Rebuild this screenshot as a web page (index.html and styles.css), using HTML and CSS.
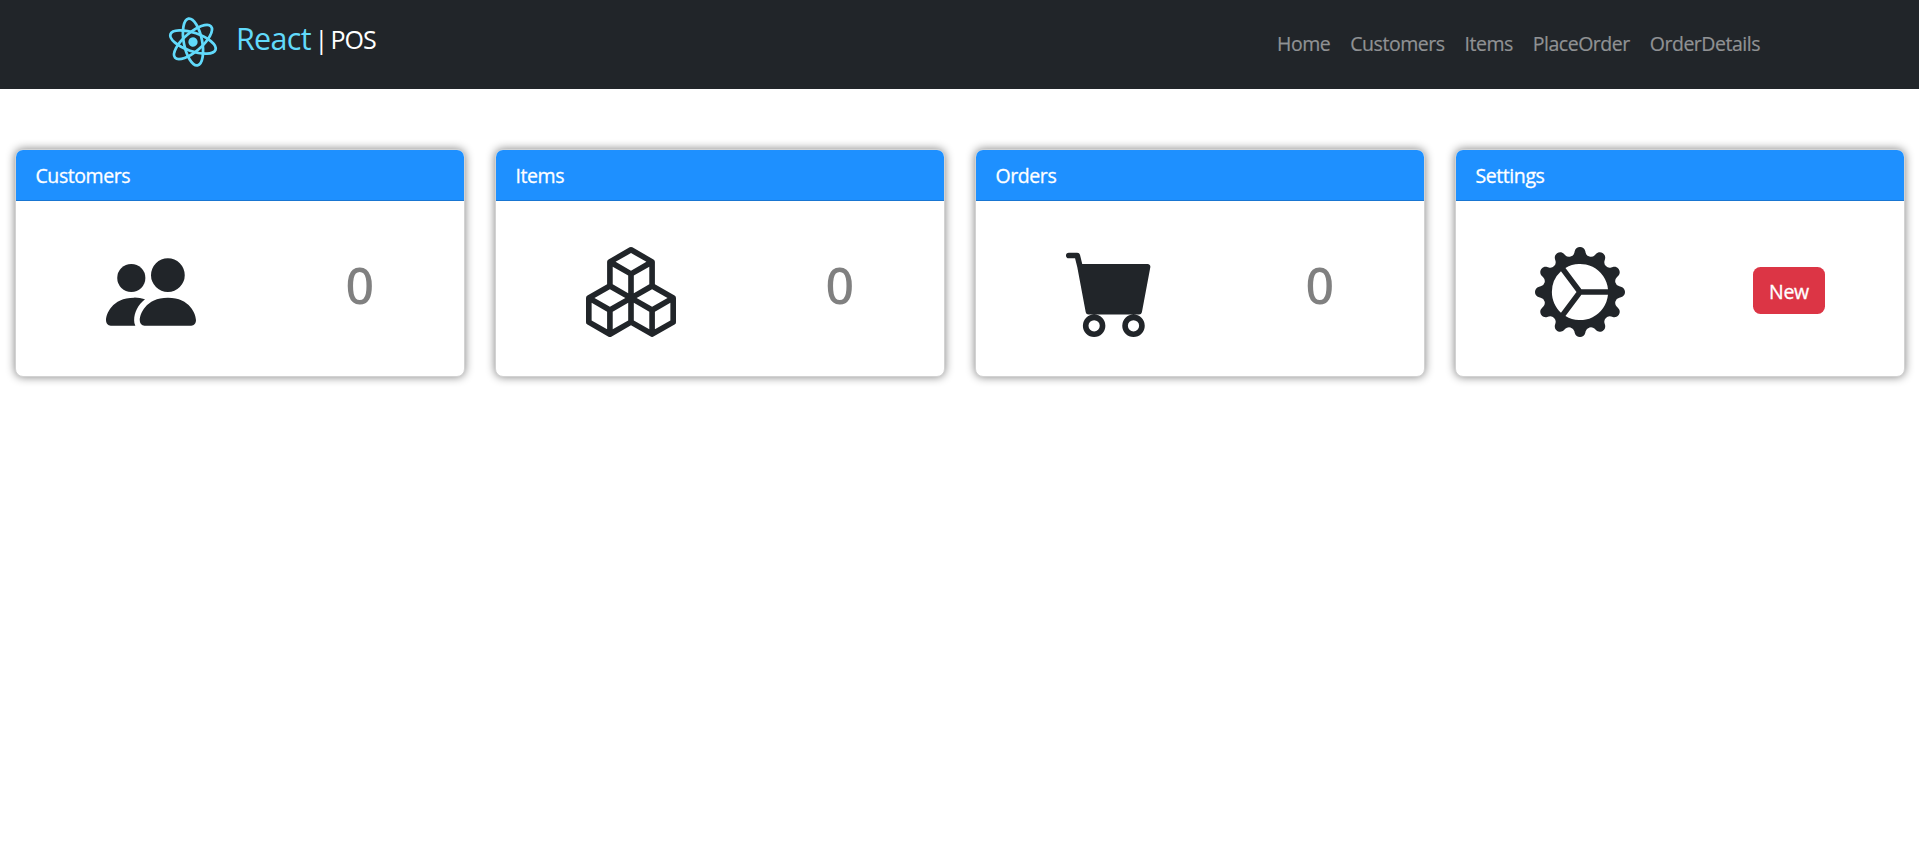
FILE: index.html
```html
<!DOCTYPE html>
<html lang="en">
<head>
<meta charset="utf-8">
<title>React | POS</title>
<link rel="stylesheet" href="styles.css">
</head>
<body>
<header class="navbar">
  <a class="brand">
    <svg class="logo" viewBox="-256 -256 512 512">
      <g transform="rotate(19)">
        <circle class="nucleus" r="44"/>
        <ellipse rx="226" ry="87"/>
        <ellipse rx="226" ry="87" transform="rotate(60)"/>
        <ellipse rx="226" ry="87" transform="rotate(120)"/>
      </g>
    </svg>
    <span class="brand-react">React</span><span class="brand-bar">|</span><span class="brand-pos">POS</span>
  </a>
  <nav class="links">
    <a>Home</a><a>Customers</a><a>Items</a><a>PlaceOrder</a><a>OrderDetails</a>
  </nav>
</header>
<main class="cards">
  <section class="card">
    <h2 class="card-header">Customers</h2>
    <div class="card-body">
      <svg class="icon" viewBox="0 0 16 16"><path d="M7 14s-1 0-1-1 1-4 5-4 5 3 5 4-1 1-1 1H7zm4-6a3 3 0 1 0 0-6 3 3 0 0 0 0 6z"/><path d="M5.216 14A2.238 2.238 0 0 1 5 13c0-1.355.68-2.75 1.936-3.72A6.325 6.325 0 0 0 5 9c-4 0-5 3-5 4s1 1 1 1h4.216z"/><path d="M4.5 8a2.5 2.5 0 1 0 0-5 2.5 2.5 0 0 0 0 5z"/></svg>
      <span class="count">0</span>
    </div>
  </section>
  <section class="card">
    <h2 class="card-header">Items</h2>
    <div class="card-body">
      <svg class="icon" viewBox="0 0 16 16"><path d="M7.752.066a.5.5 0 0 1 .496 0l3.75 2.143a.5.5 0 0 1 .252.434v3.995l3.498 2A.5.5 0 0 1 16 9.07v4.286a.5.5 0 0 1-.252.434l-3.75 2.143a.5.5 0 0 1-.496 0l-3.502-2-3.502 2.001a.5.5 0 0 1-.496 0l-3.75-2.143A.5.5 0 0 1 0 13.357V9.071a.5.5 0 0 1 .252-.434L3.75 6.638V2.643a.5.5 0 0 1 .252-.434L7.752.066ZM4.25 7.504 1.508 9.071l2.742 1.567 2.742-1.567L4.25 7.504ZM7.5 9.933l-2.75 1.571v3.134l2.75-1.571V9.933Zm1 3.134 2.75 1.571v-3.134L8.5 9.933v3.134Zm.508-3.996 2.742 1.567 2.742-1.567-2.742-1.567-2.742 1.567Zm2.242-2.433V3.504L8.5 5.076V8.21l2.75-1.572ZM7.5 8.21V5.076L4.75 3.504v3.134L7.5 8.21ZM5.258 2.643 8 4.21l2.742-1.567L8 1.076 5.258 2.643ZM15 9.933l-2.75 1.571v3.134L15 13.067V9.933ZM3.75 14.638v-3.134L1 9.933v3.134l2.75 1.571Z"/></svg>
      <span class="count">0</span>
    </div>
  </section>
  <section class="card">
    <h2 class="card-header">Orders</h2>
    <div class="card-body">
      <svg class="icon" viewBox="0 0 16 16"><path d="M0 1.5A.5.5 0 0 1 .5 1H2a.5.5 0 0 1 .485.379L2.89 3H14.5a.5.5 0 0 1 .491.592l-1.5 8A.5.5 0 0 1 13 12H4a.5.5 0 0 1-.491-.408L2.01 3.607 1.61 2H.5a.5.5 0 0 1-.5-.5zM5 12a2 2 0 1 0 0 4 2 2 0 0 0 0-4zm7 0a2 2 0 1 0 0 4 2 2 0 0 0 0-4zm-7 1a1 1 0 1 1 0 2 1 1 0 0 1 0-2zm7 0a1 1 0 1 1 0 2 1 1 0 0 1 0-2z"/></svg>
      <span class="count">0</span>
    </div>
  </section>
  <section class="card">
    <h2 class="card-header">Settings</h2>
    <div class="card-body card-body-action">
      <svg class="icon" viewBox="0 0 16 16"><path d="M7.068.727c.243-.97 1.62-.97 1.864 0l.071.286a.96.96 0 0 0 1.622.434l.205-.211c.695-.719 1.888-.03 1.613.931l-.08.284a.96.96 0 0 0 1.187 1.187l.283-.081c.96-.275 1.65.918.931 1.613l-.211.205a.96.96 0 0 0 .434 1.622l.286.071c.97.243.97 1.62 0 1.864l-.286.071a.96.96 0 0 0-.434 1.622l.211.205c.719.695.03 1.888-.931 1.613l-.284-.08a.96.96 0 0 0-1.187 1.187l.081.283c.275.96-.918 1.65-1.613.931l-.205-.211a.96.96 0 0 0-1.622.434l-.071.286c-.243.97-1.62.97-1.864 0l-.071-.286a.96.96 0 0 0-1.622-.434l-.205.211c-.695.719-1.888.03-1.613-.931l.08-.284a.96.96 0 0 0-1.186-1.187l-.284.081c-.96.275-1.65-.918-.931-1.613l.211-.205a.96.96 0 0 0-.434-1.622l-.286-.071c-.97-.243-.97-1.62 0-1.864l.286-.071a.96.96 0 0 0 .434-1.622l-.211-.205c-.719-.695-.03-1.888.931-1.613l.284.08a.96.96 0 0 0 1.187-1.186l-.081-.284c-.275-.96.918-1.65 1.613-.931l.205.211a.96.96 0 0 0 1.622-.434l.071-.286zM12.973 8.5H8.25l-2.834 3.779A4.998 4.998 0 0 0 12.973 8.5zm0-1a4.998 4.998 0 0 0-7.557-3.779l2.834 3.78h4.723zM5.048 3.967c-.03.021-.058.043-.087.065l.087-.065zm-.431.355A4.984 4.984 0 0 0 3.002 8c0 1.455.622 2.765 1.615 3.678L7.375 8 4.617 4.322zm.344 7.646.087.065-.087-.065z"/></svg>
      <button class="btn" type="button">New</button>
    </div>
  </section>
</main>
</body>
</html>
```
FILE: styles.css
```css
* { box-sizing: border-box; }
body {
  margin: 0;
  min-height: 100vh;
  background: #fff;
  color: #212529;
  font-family: "Open Sans", "Noto Sans", sans-serif;
  font-size: 19.5px;
  line-height: 30px;
}
.navbar {
  height: 89px;
  padding: 0 159px 0 166px;
  background: #212529;
  display: flex;
  justify-content: space-between;
}
.brand { display: flex; padding-top: 15px; color: #fff; }
.logo { width: 54px; height: 54px; }
.logo ellipse { fill: none; stroke: #61dafb; stroke-width: 26; }
.nucleus { fill: #61dafb; }
.brand-react {
  width: 80px;
  margin-left: 16px;
  color: #61dafb;
  font-size: 30.5px;
  line-height: 46px;
  letter-spacing: -0.7px;
}
.brand-bar,
.brand-pos {
  font-size: 25px;
  line-height: 48px;
  letter-spacing: -1px;
}
.brand-bar { width: 15px; margin-left: -1.5px; }
.brand-pos { margin-left: 1px; }
.links {
  display: flex;
  gap: 20px;
  padding-top: 29px;
  color: #909294;
  letter-spacing: -0.48px;
  -webkit-text-stroke: 0.2px;
}
.cards {
  display: grid;
  grid-template-columns: repeat(4, 450px);
  gap: 30px;
  padding: 60px 0 0 15px;
}
.card {
  height: 228px;
  border: 1px solid #d2d2d2;
  border-radius: 8px;
  background: #fff;
  box-shadow: 0 0 10px gray;
}
.card-header {
  height: 51px;
  margin: 0;
  padding: 11px 19.5px 9px;
  border-bottom: 1px solid #1976d2;
  border-radius: 7px 7px 0 0;
  background: #1e90ff;
  color: #fff;
  font-size: 19.5px;
  font-weight: 400;
  letter-spacing: -0.42px;
  -webkit-text-stroke: 0.3px;
}
.card-body {
  display: flex;
  justify-content: space-between;
  padding: 46px 90px 0;
}
.icon { width: 90px; height: 90px; fill: #212529; }
.count {
  margin-top: 8px;
  color: gray;
  font-family: "Noto Sans", sans-serif;
  font-size: 50px;
  font-weight: 500;
  line-height: 60px;
}
.card-body-action { padding: 46px 79px 0; }
.btn {
  width: 72px;
  height: 47px;
  margin-top: 20px;
  padding: 3px 0 0;
  border: 0;
  border-radius: 7.5px;
  background: #dc3545;
  color: #fff;
  font: inherit;
  letter-spacing: -0.3px;
  -webkit-text-stroke: 0.3px;
}
```
